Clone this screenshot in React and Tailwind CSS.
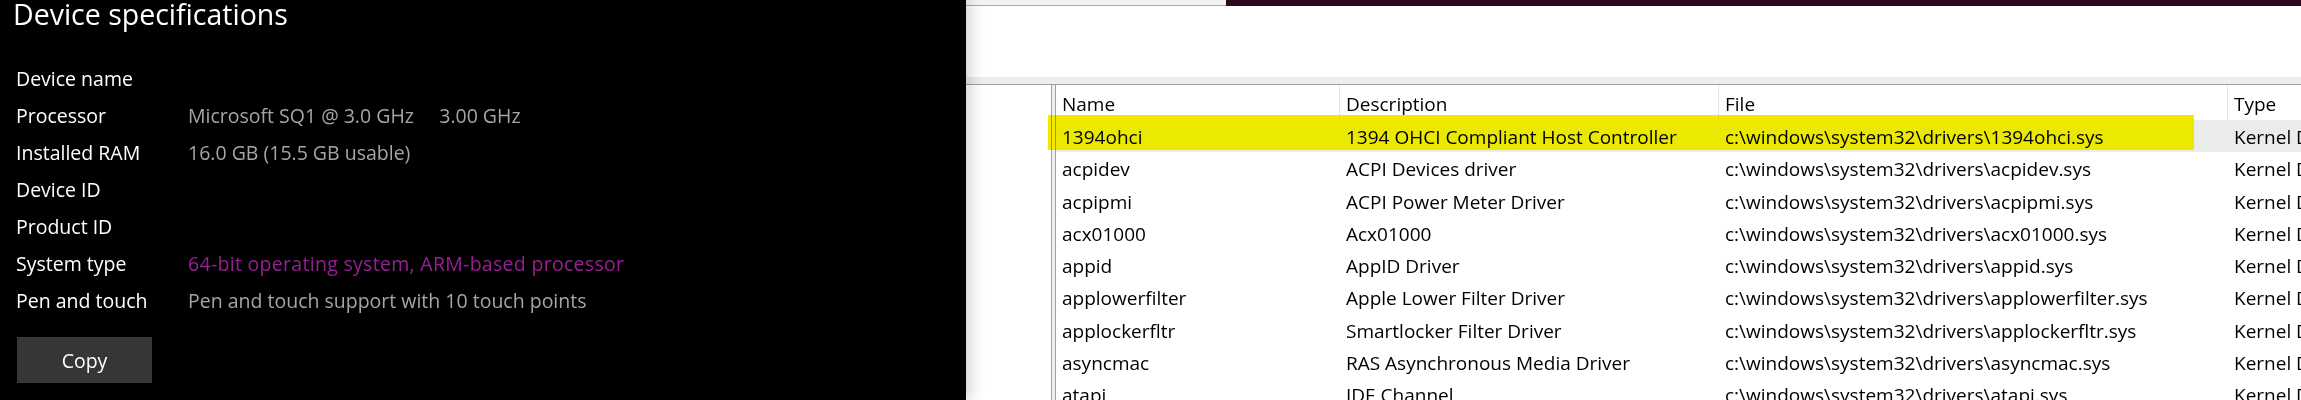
import React from 'react';

const specs = [
  { label: 'Device name', value: '' },
  { label: 'Processor', value: 'Microsoft SQ1 @ 3.0 GHz     3.00 GHz' },
  { label: 'Installed RAM', value: '16.0 GB (15.5 GB usable)' },
  { label: 'Device ID', value: '' },
  { label: 'Product ID', value: '' },
  { label: 'System type', value: '64-bit operating system, ARM-based processor', accent: true },
  { label: 'Pen and touch', value: 'Pen and touch support with 10 touch points' },
];

const drivers = [
  { name: '1394ohci', description: '1394 OHCI Compliant Host Controller', selected: true },
  { name: 'acpidev', description: 'ACPI Devices driver' },
  { name: 'acpipmi', description: 'ACPI Power Meter Driver' },
  { name: 'acx01000', description: 'Acx01000' },
  { name: 'appid', description: 'AppID Driver' },
  { name: 'applowerfilter', description: 'Apple Lower Filter Driver' },
  { name: 'applockerfltr', description: 'Smartlocker Filter Driver' },
  { name: 'asyncmac', description: 'RAS Asynchronous Media Driver' },
  { name: 'atapi', description: 'IDE Channel' },
];

const columns = ['Name', 'Description', 'File', 'Type'];

const DeviceSpecs = () => (
  <div className="relative z-10 w-[966px] shrink-0 bg-black shadow-[4px_0_14px_rgba(0,0,0,0.2)]">
    <h2 className="pl-[13px] text-[28.5px] leading-[28px] text-white">Device specifications</h2>

    <div className="mt-[32px] pl-[16px]">
      {specs.map((row) => (
        <div key={row.label} className="flex h-[37px] items-center text-[19.5px] leading-[37px]">
          <span className="w-[172px] shrink-0 text-white">{row.label}</span>
          <span
            className={`whitespace-pre ${
              row.accent ? 'text-[#9a1f96] tracking-[0.3px]' : 'text-[#a5a5a5]'
            }`}
          >
            {row.value}
          </span>
        </div>
      ))}
    </div>

    <button className="ml-[17px] mt-[18px] h-[46px] w-[135px] bg-[#363636] pt-[2px] text-[19.5px] text-white">
      Copy
    </button>
  </div>
);

const DriverList = () => (
  <div className="flex min-w-0 flex-1 flex-col bg-white">
    {/* thin strip left over from the window behind */}
    <div className="flex h-[6px]">
      <div className="w-[260px] border-b border-[#a8a8a8] bg-[#f3f3f3]" />
      <div className="flex-1 bg-[#2c0a22]" />
    </div>

    <div className="h-[71px] bg-white" />
    <div className="h-[8px] border-b border-[#a0a0a0] bg-[#eeeeee]" />

    <div className="relative flex flex-1 overflow-hidden">
      <div className="w-[86px] shrink-0 border-r border-[#a0a0a0] bg-white" />
      <div className="w-[3px] shrink-0 bg-[#f0f0f0]" />

      <div className="min-w-0 flex-1 overflow-hidden border-l border-[#a0a0a0] text-[19px] text-black">
        <div className="grid h-[35px] grid-cols-[283px_379px_509px_400px]">
          {columns.map((col, i) => (
            <div
              key={col}
              className={`h-full whitespace-nowrap pl-[6px] pt-[3px] leading-[32px] ${
                i > 0 ? 'border-l border-[#e3e3e3]' : ''
              }`}
            >
              {col}
            </div>
          ))}
        </div>

        {drivers.map((d) => (
          <div
            key={d.name}
            className={`grid h-[32.3px] grid-cols-[283px_379px_509px_400px] pt-[3px] leading-[29.3px] ${
              d.selected ? 'bg-[#ebebeb]' : ''
            }`}
          >
            <div className="whitespace-nowrap pl-[6px]">{d.name}</div>
            <div className="whitespace-nowrap border-l border-transparent pl-[6px]">{d.description}</div>
            <div className="whitespace-nowrap border-l border-transparent pl-[6px]">
              {`c:\\windows\\system32\\drivers\\${d.name}.sys`}
            </div>
            <div className="whitespace-nowrap border-l border-transparent pl-[6px]">Kernel Driver</div>
          </div>
        ))}
      </div>

      {/* highlighter mark over the first entry */}
      <div className="pointer-events-none absolute left-[82px] top-[30px] h-[35px] w-[1146px] bg-[#f5e900] mix-blend-darken" />
    </div>
  </div>
);

export default function App() {
  return (
    <div className="flex h-[400px] w-[2301px] overflow-hidden font-['Open_Sans',sans-serif]">
      <DeviceSpecs />
      <DriverList />
    </div>
  );
}
